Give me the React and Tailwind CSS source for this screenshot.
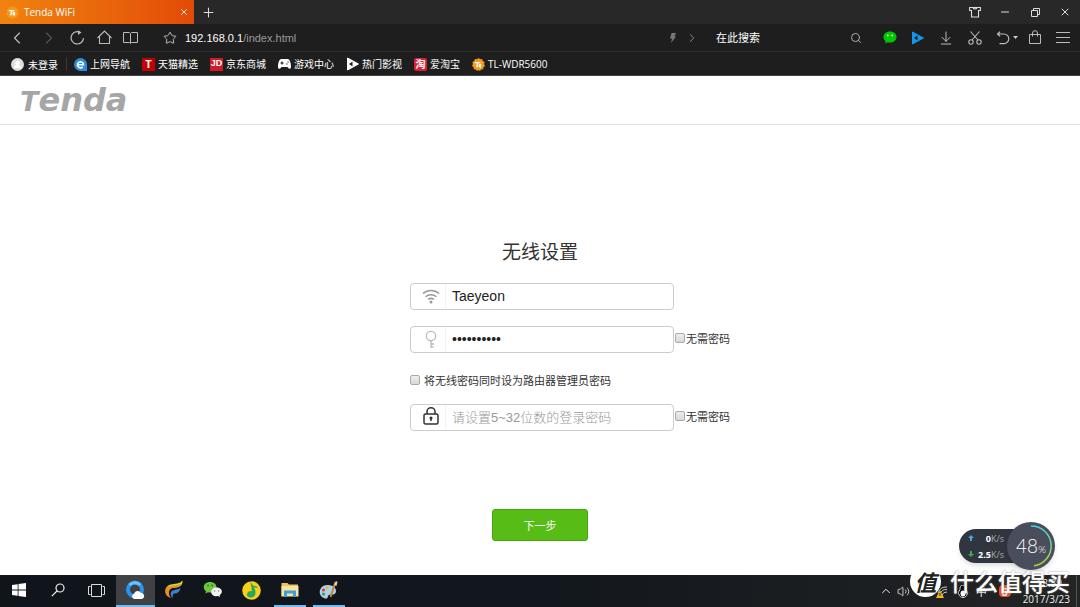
import React, { useState } from 'react'
import {
  ChevronLeft, ChevronRight, Star, Search,
  Minus, X, Plus, ArrowDownToLine, ChevronUp, Volume2,
} from 'lucide-react'
import { FaGamepad } from 'react-icons/fa'

const TendaBadge = () => (
  <svg width="13" height="13" viewBox="0 0 14 14">
    <path d="M7 0l1.700 1.400 2.200-.2.7 2.100 2 1L13 6.500l1 2-1.700 1.400-.2 2.200-2.200.2L8.500 14 7 13l-1.500 1-1.400-1.700-2.200-.2-.2-2.200L0 8.500l1-2L.4 4.300l2-1 .7-2.100 2.200.2z" fill="#f39a1c" />
    <path d="M3 5h6M6.200 5L5.200 10M7 8.500c2 .2 3-1 2-1.500-1.500 0-2 3 .8 2.600" stroke="#fff" strokeWidth="1.500" fill="none" />
  </svg>
)

const ReloadIcon = () => (
  <svg width="15" height="15" viewBox="0 0 15 15" fill="none" stroke="currentColor" strokeWidth="1.200">
    <path d="M13.500 8A6.200 6.200 0 1 1 9.500 2" />
    <path d="M8 .2L11.500 2.600 8 5z" fill="currentColor" stroke="none" />
  </svg>
)

const HomeIcon = () => (
  <svg width="15" height="15" viewBox="0 0 15 15" fill="none" stroke="currentColor" strokeWidth="1.100">
    <path d="M.5 8L7.500 1l7 7M2.500 6.500v7h10v-7" />
  </svg>
)

const BookIcon = () => (
  <svg width="15" height="14" viewBox="0 0 15 14" fill="none" stroke="currentColor">
    <path d="M.5 1.500h6l1 1 1-1h6v10h-6l-1 1-1-1h-6zM7.500 2.500v10" />
  </svg>
)

const ShirtIcon = () => (
  <svg width="12" height="12" viewBox="0 0 12 12" fill="none" stroke="currentColor" strokeWidth="1.100">
    <path d="M.600 1.500h10.800v3H9.500v6.500h-7V4.500H.600zM4 1.500c.5 2 3.500 2 4 0" />
  </svg>
)

const ScissorsIcon = () => (
  <svg width="14" height="14" viewBox="0 0 14 14" fill="none" stroke="currentColor" strokeWidth="1.100">
    <path d="M2.500.5L10 9M11.500.5L4 9" />
    <circle cx="3" cy="11" r="2.200" />
    <circle cx="11" cy="11" r="2.200" />
  </svg>
)

const BagIcon = () => (
  <svg width="14" height="15" viewBox="0 0 14 15" fill="none" stroke="currentColor">
    <path d="M1.500 4.500h11v9h-11zM4.500 6.500V3a2.500 2.300 0 0 1 5 0v3.500" />
  </svg>
)

const PlayMark = ({ color, hole }) => (
  <svg width="13" height="14" viewBox="0 0 13 14">
    <path d="M1.500 1L12.500 7 1.500 13z" fill={color} stroke={color} strokeLinejoin="round" />
    <path d="M6.500 4.500v5L3 7z" fill={hole} />
  </svg>
)

const bookmarks = [
  {
    name: '上网导航',
    icon: (
      <svg width="13" height="13" viewBox="0 0 13 13">
        <path d="M6.500 0a6.500 6.500 0 1 0 0 13H13V6.500A6.500 6.500 0 0 0 6.500 0z" fill="#2b8ce6" />
        <path d="M3.500 6.800h6a3 3 0 1 0-.8 2.100" stroke="#fff" strokeWidth="1.600" fill="none" />
      </svg>
    ),
  },
  { name: '天猫精选', icon: <span className="flex size-[13px] items-center justify-center bg-[#c40000] text-[11px] font-bold">T</span> },
  { name: '京东商城', icon: <span className="flex size-[13px] items-center justify-center bg-[#d01a26] font-['Liberation_Sans',sans-serif] text-[9px] font-bold">JD</span> },
  {
    name: '游戏中心',
    icon: (
      <svg width="13" height="12" viewBox="0 0 13 12">
        <path d="M3.500 1h6C12 1 13 5.500 13 8.500s-2 3-3.500.5h-6C2 11.500 0 11.500 0 8.500S1 1 3.500 1z" fill="#fff" />
        <path d="M2.500 5h3M4 3.500v3M8.200 6h1.300M9.500 4h1.300" stroke="#1e1e1e" strokeWidth="1.200" />
      </svg>
    ),
  },
  { name: '热门影视', icon: <PlayMark color="#fff" hole="#1e1e1e" /> },
  { name: '爱淘宝', icon: <span className="flex size-[13px] items-center justify-center rounded-xs bg-[#dc1e32] text-[10px] font-bold">淘</span> },
  { name: 'TL-WDR5600', icon: <TendaBadge /> },
]

const tasks = [
  {
    name: 'Start',
    icon: (
      <svg width="14" height="14" viewBox="0 0 14 14" fill="#fff">
        <path d="M0 2l5.700-.8v5.400H0zM6.500 1.100L14 0v6.600H6.500zM0 7.400h5.700v5.400L0 12zM6.500 7.400H14V14l-7.500-1.100z" />
      </svg>
    ),
  },
  {
    name: 'Search',
    icon: (
      <svg width="14" height="14" viewBox="0 0 14 14" fill="none" stroke="#eee" strokeWidth="1.200">
        <circle cx="9" cy="5" r="4" />
        <path d="M6 8L.8 13.200" />
      </svg>
    ),
  },
  {
    name: 'Task view',
    icon: (
      <svg width="17" height="13" viewBox="0 0 17 13" fill="none" stroke="#ddd">
        <path d="M3.500.5h10v12h-10zM2.500 2.500h-2v8h2M14.500 2.500h2v8h-2" />
      </svg>
    ),
  },
  {
    name: 'QQ Browser',
    active: true,
    icon: (
      <svg width="20" height="20" viewBox="0 0 20 20">
        <circle cx="10" cy="9.500" r="7" fill="none" stroke="#2b93ee" strokeWidth="4" />
        <path d="M4.500 5A7 7 0 0 1 15 5" fill="none" stroke="#67c2fb" strokeWidth="3" />
        <path d="M9 19a3 3 0 0 1 .2-5.600 3.600 3.600 0 0 1 6.500-.6A3.200 3.200 0 0 1 17 19z" fill="#fff" />
      </svg>
    ),
  },
  {
    name: 'Thunder',
    icon: (
      <svg width="20" height="20" viewBox="0 0 20 20">
        <path d="M1.500 9C4 3.500 9 4.500 13 3.500c2.500-.5 4-1.500 5.500-3 .5 4-2 6.500-6 7-4 .4-7 .5-8.500 3z" fill="#cfd62f" />
        <path d="M1.500 9C5 5 10 6 14 5c1-.2 2-.7 3-1.500-1 3-3 3.700-6.500 4C7 8 5 9.500 5 13c0 2 .7 3.500 2 5-4-1-7-4.500-5.500-9z" fill="#f08a24" />
        <path d="M7 12c2-2.500 6-2 9.500-4-.5 4-3.500 5.500-6 5.500-1.200 0-2 1-1.500 4.500C7 17 6 14.500 7 12z" fill="#3b7fd1" />
      </svg>
    ),
  },
  {
    name: 'WeChat',
    icon: (
      <svg width="20" height="18" viewBox="0 0 20 18">
        <path d="M7 1C3 1 .8 3.500.8 6.200c0 1.700.9 3 2.200 4L2.500 12.500l2.500-1.200c4 1 8.500-1 8.500-5.100C13.500 3.500 11 1 7 1z" fill="#6cc644" />
        <path d="M13.500 6.500c-3 0-5.300 1.900-5.300 4.400s2.500 4.800 6.800 4.200l2 1-.4-1.900c4.400-3 2-7.700-3.100-7.700z" fill="#f2f2f2" />
        <path d="M4.500 4.500h1.200M8.500 4.500h1.200" stroke="#214d18" strokeWidth="1.300" />
        <path d="M11 10h1.200M15 10h1.200" stroke="#666" strokeWidth="1.200" />
      </svg>
    ),
  },
  {
    name: 'QQ Music',
    icon: (
      <svg width="19" height="19" viewBox="0 0 19 19">
        <circle cx="9.500" cy="9.500" r="9.300" fill="#f8cf1c" />
        <path d="M8.500.5l2.500 4 4 1c1 .4.500 1.300 0 1.200l-3-.5c2 4 2.500 9-1.500 10-3 .8-6-.4-5.500-3 .4-2.500 3-3.700 5-3z" fill="#27a957" />
      </svg>
    ),
  },
  {
    name: 'File Explorer',
    open: true,
    icon: (
      <svg width="18" height="16" viewBox="0 0 18 16">
        <path d="M.5 1h6l1.500 1.500h9V14H.5z" fill="#eac366" />
        <path d="M.5 4h17v10.500H.5z" fill="#fbe39b" />
        <path d="M3 8.500h12V15h-3v-3.500H6V15H3z" fill="#3e9fe0" />
      </svg>
    ),
  },
  {
    name: 'Paint',
    open: true,
    icon: (
      <svg width="19" height="19" viewBox="0 0 19 19">
        <path d="M8 4C3 4 .5 8 .8 12c.4 3 3.200 5.500 6.500 5.500 2 0 1-2.500 2.500-3.500S17 15 17 10c0-4-4-6-9-6z" fill="#a9d2ea" />
        <circle cx="4.500" cy="9" r="1.600" fill="#d8402c" />
        <circle cx="8" cy="6.800" r="1.500" fill="#f0b52b" />
        <circle cx="4.500" cy="13" r="1.500" fill="#3b9a45" />
        <path d="M16.500 1l-5 15" stroke="#c8823a" strokeWidth="2" />
        <path d="M15 4l2-4 1.500 1-1 4z" fill="#e9c9a0" />
      </svg>
    ),
  },
]

const KeyIcon = () => (
  <svg width="12" height="19" viewBox="0 0 12 19" fill="none" stroke="#bbb" strokeWidth="1.300">
    <circle cx="6" cy="6" r="4.700" />
    <path d="M6 10.700V18M6 14h3M6 17h2.500" />
  </svg>
)

const WifiIcon = () => (
  <svg width="18" height="15" viewBox="0 0 18 15" fill="none" stroke="#999" strokeWidth="1.500">
    <path d="M1 4.500a12 12 0 0 1 16 0M3.500 7.700a8.500 8.500 0 0 1 11 0M6 10.500a5 5 0 0 1 6 0" />
    <circle cx="9" cy="13" r="1.500" fill="#999" stroke="none" />
  </svg>
)

const LockIcon = () => (
  <svg width="16" height="21" viewBox="0 0 16 21" fill="none" stroke="#333" strokeWidth="1.500">
    <rect x="1" y="7" width="14" height="10" rx="1.500" />
    <path d="M4 7V4.500a4 3.700 0 0 1 8 0V7M8 10.500v3.500" />
    <circle cx="8" cy="11" r=".8" fill="#333" />
  </svg>
)

function Field({ icon, ...rest }) {
  return (
    <div className="flex h-[27px] w-[264px] shrink-0 items-center rounded border border-[#ccc] bg-white">
      <span className="flex h-full w-[35px] shrink-0 items-center justify-end border-r border-[#f2f2f2] pr-1">
        <span className="flex w-[20px] justify-center">{icon}</span>
      </span>
      <input
        {...rest}
        className="min-w-0 flex-1 pl-[6px] font-['Liberation_Sans','Noto_Sans_CJK_SC',sans-serif] text-[#222] outline-none placeholder:text-[13px] placeholder:font-light placeholder:text-[#999]"
      />
    </div>
  )
}

function Check({ label, className = '' }) {
  return (
    <label className={`flex items-center text-[11px] whitespace-nowrap text-[#333] ${className}`}>
      <input type="checkbox" className="size-[10px] appearance-none rounded-xs border border-[#aaa] bg-linear-to-b from-[#eee] to-[#d8d8d8]" />
      {label}
    </label>
  )
}

const Divider = () => <span className="h-[14px] w-px bg-[#3a3a3a]" />

function BrowserBar() {
  return (
    <header className="bg-[#1e1e1e] text-[#bbb]">
      <div className="flex h-6 items-center bg-[#282828]">
        <div className="flex h-full w-[194px] items-center bg-linear-to-r from-[#f0830f] to-[#e24a08] pr-[5px] pl-[6px] text-[10px] text-white">
          <TendaBadge />
          <span className="ml-[5px] flex-1 font-['Open_Sans',sans-serif] font-medium">Tenda WiFi</span>
          <button aria-label="Close tab"><X size={10} strokeWidth={2} /></button>
        </div>
        <button aria-label="New tab" className="ml-[7px] text-[#ddd]"><Plus size={15} strokeWidth={1.700} /></button>
        <div className="ml-auto flex items-center gap-[18px] pr-[9px] text-[#ddd]">
          <button aria-label="Skins"><ShirtIcon /></button>
          <button aria-label="Minimize"><Minus size={12} strokeWidth={2} /></button>
          <button aria-label="Restore">
            <svg width="12" height="12" viewBox="0 0 12 12" fill="none" stroke="currentColor"><path d="M2.500 4.500h6v6h-6zM4.500 4.500v-2h6v6h-2" /></svg>
          </button>
          <button aria-label="Close"><X size={12} strokeWidth={2} /></button>
        </div>
      </div>

      <div className="flex h-7 items-center border-b border-[#2c2c2c]">
        <div className="flex w-[145px] items-center justify-between pr-[7px] pl-[7px]">
          <button aria-label="Back"><ChevronLeft size={20} strokeWidth={1.400} /></button>
          <button aria-label="Forward" className="text-[#555]"><ChevronRight size={20} strokeWidth={1.400} /></button>
          <button aria-label="Reload"><ReloadIcon /></button>
          <button aria-label="Home"><HomeIcon /></button>
          <button aria-label="Library"><BookIcon /></button>
        </div>
        <span className="ml-2"><Divider /></span>
        <button aria-label="Favorite" className="ml-[10px]"><Star size={14} strokeWidth={1.700} /></button>
        <p className="ml-2 flex-1 pt-px font-['Liberation_Sans',sans-serif] text-[11px]">
          <span className="text-white">192.168.0.1</span><span className="text-[#999]">/index.html</span>
        </p>
        <svg width="8" height="10" viewBox="0 0 8 10" fill="#777"><path d="M2.500 0H7L5.500 3.500H7L2 10l1-4.500H1z" /></svg>
        <ChevronRight size={14} className="ml-2 text-[#888]" strokeWidth={1.700} />
        <span className="ml-[10px]"><Divider /></span>
        <input
          aria-label="在此搜索"
          placeholder="在此搜索"
          className="ml-[7px] w-[134px] text-[11px] outline-none placeholder:text-white"
        />
        <Search size={12} strokeWidth={1.800} />
        <span className="mr-[14px] ml-[7px]"><Divider /></span>
        <div className="flex items-center gap-[14px] pr-[10px]">
          <button aria-label="WeChat">
            <svg width="14" height="13" viewBox="0 0 14 13">
              <path d="M7 .5C3 .5.500 2.900.5 6c0 1.800.8 3.200 2 4.200l-.3 2.300 2.300-1.200C9 12.500 13.500 10 13.500 6 13.500 2.900 11 .5 7 .5z" fill="#00c800" />
              <path d="M4 4.500h1.500M8.500 4.500H10" stroke="#fff" strokeWidth="1.500" />
            </svg>
          </button>
          <button aria-label="Video"><PlayMark color="#1296f0" hole="#1e1e1e" /></button>
          <button aria-label="Downloads"><ArrowDownToLine size={16} strokeWidth={1.500} /></button>
          <button aria-label="Screenshot"><ScissorsIcon /></button>
          <button aria-label="Undo" className="-mr-1 flex items-center gap-[3px]">
            <svg width="14" height="14" viewBox="0 0 14 14" fill="none" stroke="currentColor" strokeWidth="1.200">
              <path d="M4 .8L1.500 3 4 5.200M1.500 3H8a4.800 4.800 0 0 1 0 9.600H3.500" />
            </svg>
            <svg width="5" height="3" viewBox="0 0 5 3" fill="#ccc"><path d="M0 0h5L2.500 3z" /></svg>
          </button>
          <button aria-label="Store"><BagIcon /></button>
          <button aria-label="Menu">
            <svg width="14" height="12" viewBox="0 0 14 12" stroke="currentColor"><path d="M0 .5h14M0 5.500h14M0 10.500h14" /></svg>
          </button>
        </div>
      </div>

      <nav className="flex h-6 items-center border-b border-[#444] pt-px pl-[11px] text-[10px] whitespace-nowrap text-white">
        <a href="#" className="mr-2 flex items-center gap-1">
          <svg width="13" height="13" viewBox="0 0 13 13">
            <circle cx="6.500" cy="6.500" r="6.500" fill="#ddd" />
            <path d="M6.500 2.500a2.200 2.200 0 0 1 1 4.200c2 .4 2.500 1.500 2.500 3.300H3c0-1.800.5-2.900 2.500-3.300a2.200 2.200 0 0 1 1-4.200z" fill="#fff" />
          </svg>
          未登录
        </a>
        <Divider />
        <div className="ml-[7px] flex items-center gap-3">
          {bookmarks.map((b) => (
            <a key={b.name} href="#" className="flex items-center gap-[3px] font-['Open_Sans','Noto_Sans_CJK_SC',sans-serif]">
              {b.icon}
              {b.name}
            </a>
          ))}
        </div>
      </nav>
    </header>
  )
}

function SpeedMeter() {
  return (
    <div className="absolute right-[25px] bottom-[37px] flex items-center text-white">
      <div className="flex h-[34px] w-[66px] flex-col justify-center gap-px rounded-l-full bg-[#30353f] pl-[9px] font-['Open_Sans',sans-serif] text-[9px] leading-[15px] shadow-md">
        <p className="flex w-[36px] items-center justify-between whitespace-nowrap">
          <svg width="6" height="6" viewBox="0 0 6 6" className="shrink-0"><path d="M3 0l3 3H4v3H2V3H0z" fill="#3fa9e5" /></svg>
          <span><b>0</b><span className="text-[#aaa]">K/s</span></span>
        </p>
        <p className="flex w-[36px] items-center justify-between whitespace-nowrap">
          <svg width="6" height="6" viewBox="0 0 6 6" className="shrink-0"><path d="M3 6l3-3H4V0H2v3H0z" fill="#2fb344" /></svg>
          <span><b>2.5</b><span className="text-[#aaa]">K/s</span></span>
        </p>
      </div>
      <div className="relative -ml-[18px] flex size-[48px] items-center justify-center rounded-full bg-[#4a4e5c] shadow-md">
        <svg className="absolute inset-0" width="48" height="48" viewBox="0 0 48 48" fill="none" strokeWidth="1.500">
          <defs>
            <linearGradient id="ring" x1="0" y1="0" x2="0" y2="1">
              <stop offset="0" stopColor="#3fd6d8" />
              <stop offset="1" stopColor="#b5d334" />
            </linearGradient>
          </defs>
          <path d="M24 4a20 20 0 0 1 3 39.800" stroke="url(#ring)" />
        </svg>
        <span className="font-['Lato',sans-serif] text-[19px] font-light">48<span className="text-[10px]">%</span></span>
      </div>
    </div>
  )
}

function Taskbar() {
  return (
    <footer className="flex h-8 items-center bg-linear-to-r from-[#10151c] via-[#12171d] to-[#232424] text-[#eee]">
      <div className="grid h-full w-[348px] grid-cols-9">
        {tasks.map((t) => (
          <button
            key={t.name}
            aria-label={t.name}
            className={`flex items-center justify-center border-b-2 ${t.active ? 'border-[#76b9ed] bg-[#3f4144]' : 'border-transparent'}`}
          >
            <span className={`flex h-full w-8 items-center justify-center ${t.open ? 'shadow-[0_2px_0_#76b9ed]' : ''}`}>{t.icon}</span>
          </button>
        ))}
      </div>
      <div className="ml-auto flex h-full items-center text-[10px]">
        <ChevronUp size={14} strokeWidth={1.700} />
        <Volume2 size={13} strokeWidth={1.500} className="ml-1" />
        <svg className="ml-[26px]" width="13" height="13" viewBox="0 0 13 13" fill="none" stroke="#ccc">
          <path d="M2 8a9 9 0 0 1 9-6M4 9a7 7 0 0 1 7-4.500M6 10a5 5 0 0 1 5-3" />
          <path d="M4 5l4 8H0z" fill="#f5b81c" stroke="none" />
          <path d="M4 8v3" stroke="#222" />
        </svg>
        <svg className="ml-2" width="12" height="13" viewBox="0 0 12 13">
          <path d="M6 0C3 0 3 3 3 5c-2 2-2 4-1 4 0 2 2 3.500 4 3.500S10 11 10 9c1 0 1-2-1-4 0-2 0-5-3-5z" fill="#000" stroke="#ddd" />
          <ellipse cx="6" cy="8.500" rx="2.500" ry="3" fill="#fff" />
        </svg>
        <span className="ml-[7px] text-[11px]">中</span>
        <span className="ml-3 flex size-[12px] items-center justify-center rounded-sm bg-[#f04e1e] text-[10px] font-bold">S</span>
        <time className="ml-3 flex h-full flex-col items-end justify-between text-right font-['Open_Sans',sans-serif] leading-4">
          <span className="pr-2">18:39</span>
          <span>2017/3/23</span>
        </time>
        <span className="mr-[3px] ml-[6px] h-full w-px bg-[#555]" />
      </div>
    </footer>
  )
}

export default function App() {
  const [ssid, setSsid] = useState('Taeyeon')
  const [wifiPwd, setWifiPwd] = useState('1234567890')
  const [loginPwd, setLoginPwd] = useState('')

  return (
    <div className="relative flex min-h-screen flex-col overflow-hidden bg-white font-['Noto_Sans_CJK_SC',sans-serif]">
      <BrowserBar />

      <div className="flex h-[49px] items-center border-b border-[#ddd] pl-[20px]">
        <h1 className="font-['DejaVu_Sans',sans-serif] text-[32px] leading-none font-bold text-[#a6a6a6] italic">
          <span className="text-[27px]">T</span>enda
        </h1>
      </div>

      <main className="flex-1">
        <form className="mx-auto w-[260px] pt-28" onSubmit={(e) => e.preventDefault()}>
          <h2 className="text-center text-[19px] leading-7 text-[#333]">无线设置</h2>
          <div className="mt-[18px] flex text-[14px]">
            <Field icon={<WifiIcon />} aria-label="无线名称" value={ssid} onChange={(e) => setSsid(e.target.value)} />
          </div>
          <div className="mt-4 flex items-center text-[14px]">
            <Field icon={<KeyIcon />} aria-label="无线密码" type="password" value={wifiPwd} onChange={(e) => setWifiPwd(e.target.value)} />
            <Check label="无需密码" className="ml-px gap-px pb-[3px]" />
          </div>
          <Check label="将无线密码同时设为路由器管理员密码" className="mt-[19px] h-4 gap-1" />
          <div className="mt-4 flex items-center text-[14px]">
            <Field icon={<LockIcon />} aria-label="登录密码" placeholder="请设置5~32位数的登录密码" value={loginPwd} onChange={(e) => setLoginPwd(e.target.value)} />
            <Check label="无需密码" className="ml-px gap-px pb-[3px]" />
          </div>
          <button className="mx-auto mt-[78px] block h-8 w-24 rounded-[3px] border border-[#45a80f] bg-[#57bd16] text-[11px] text-white">
            下一步
          </button>
        </form>
      </main>

      <Taskbar />
      <SpeedMeter />

      <div className="pointer-events-none absolute right-[10px] bottom-[10px] flex items-center gap-[9px] text-white">
        <span className="flex size-[31px] items-center justify-center rounded-full bg-white text-[22px] font-bold text-[#222] italic">值</span>
        <span className="text-[24px] leading-8 font-medium text-shadow-[0_0_2px_#888]">什么值得买</span>
      </div>
    </div>
  )
}
